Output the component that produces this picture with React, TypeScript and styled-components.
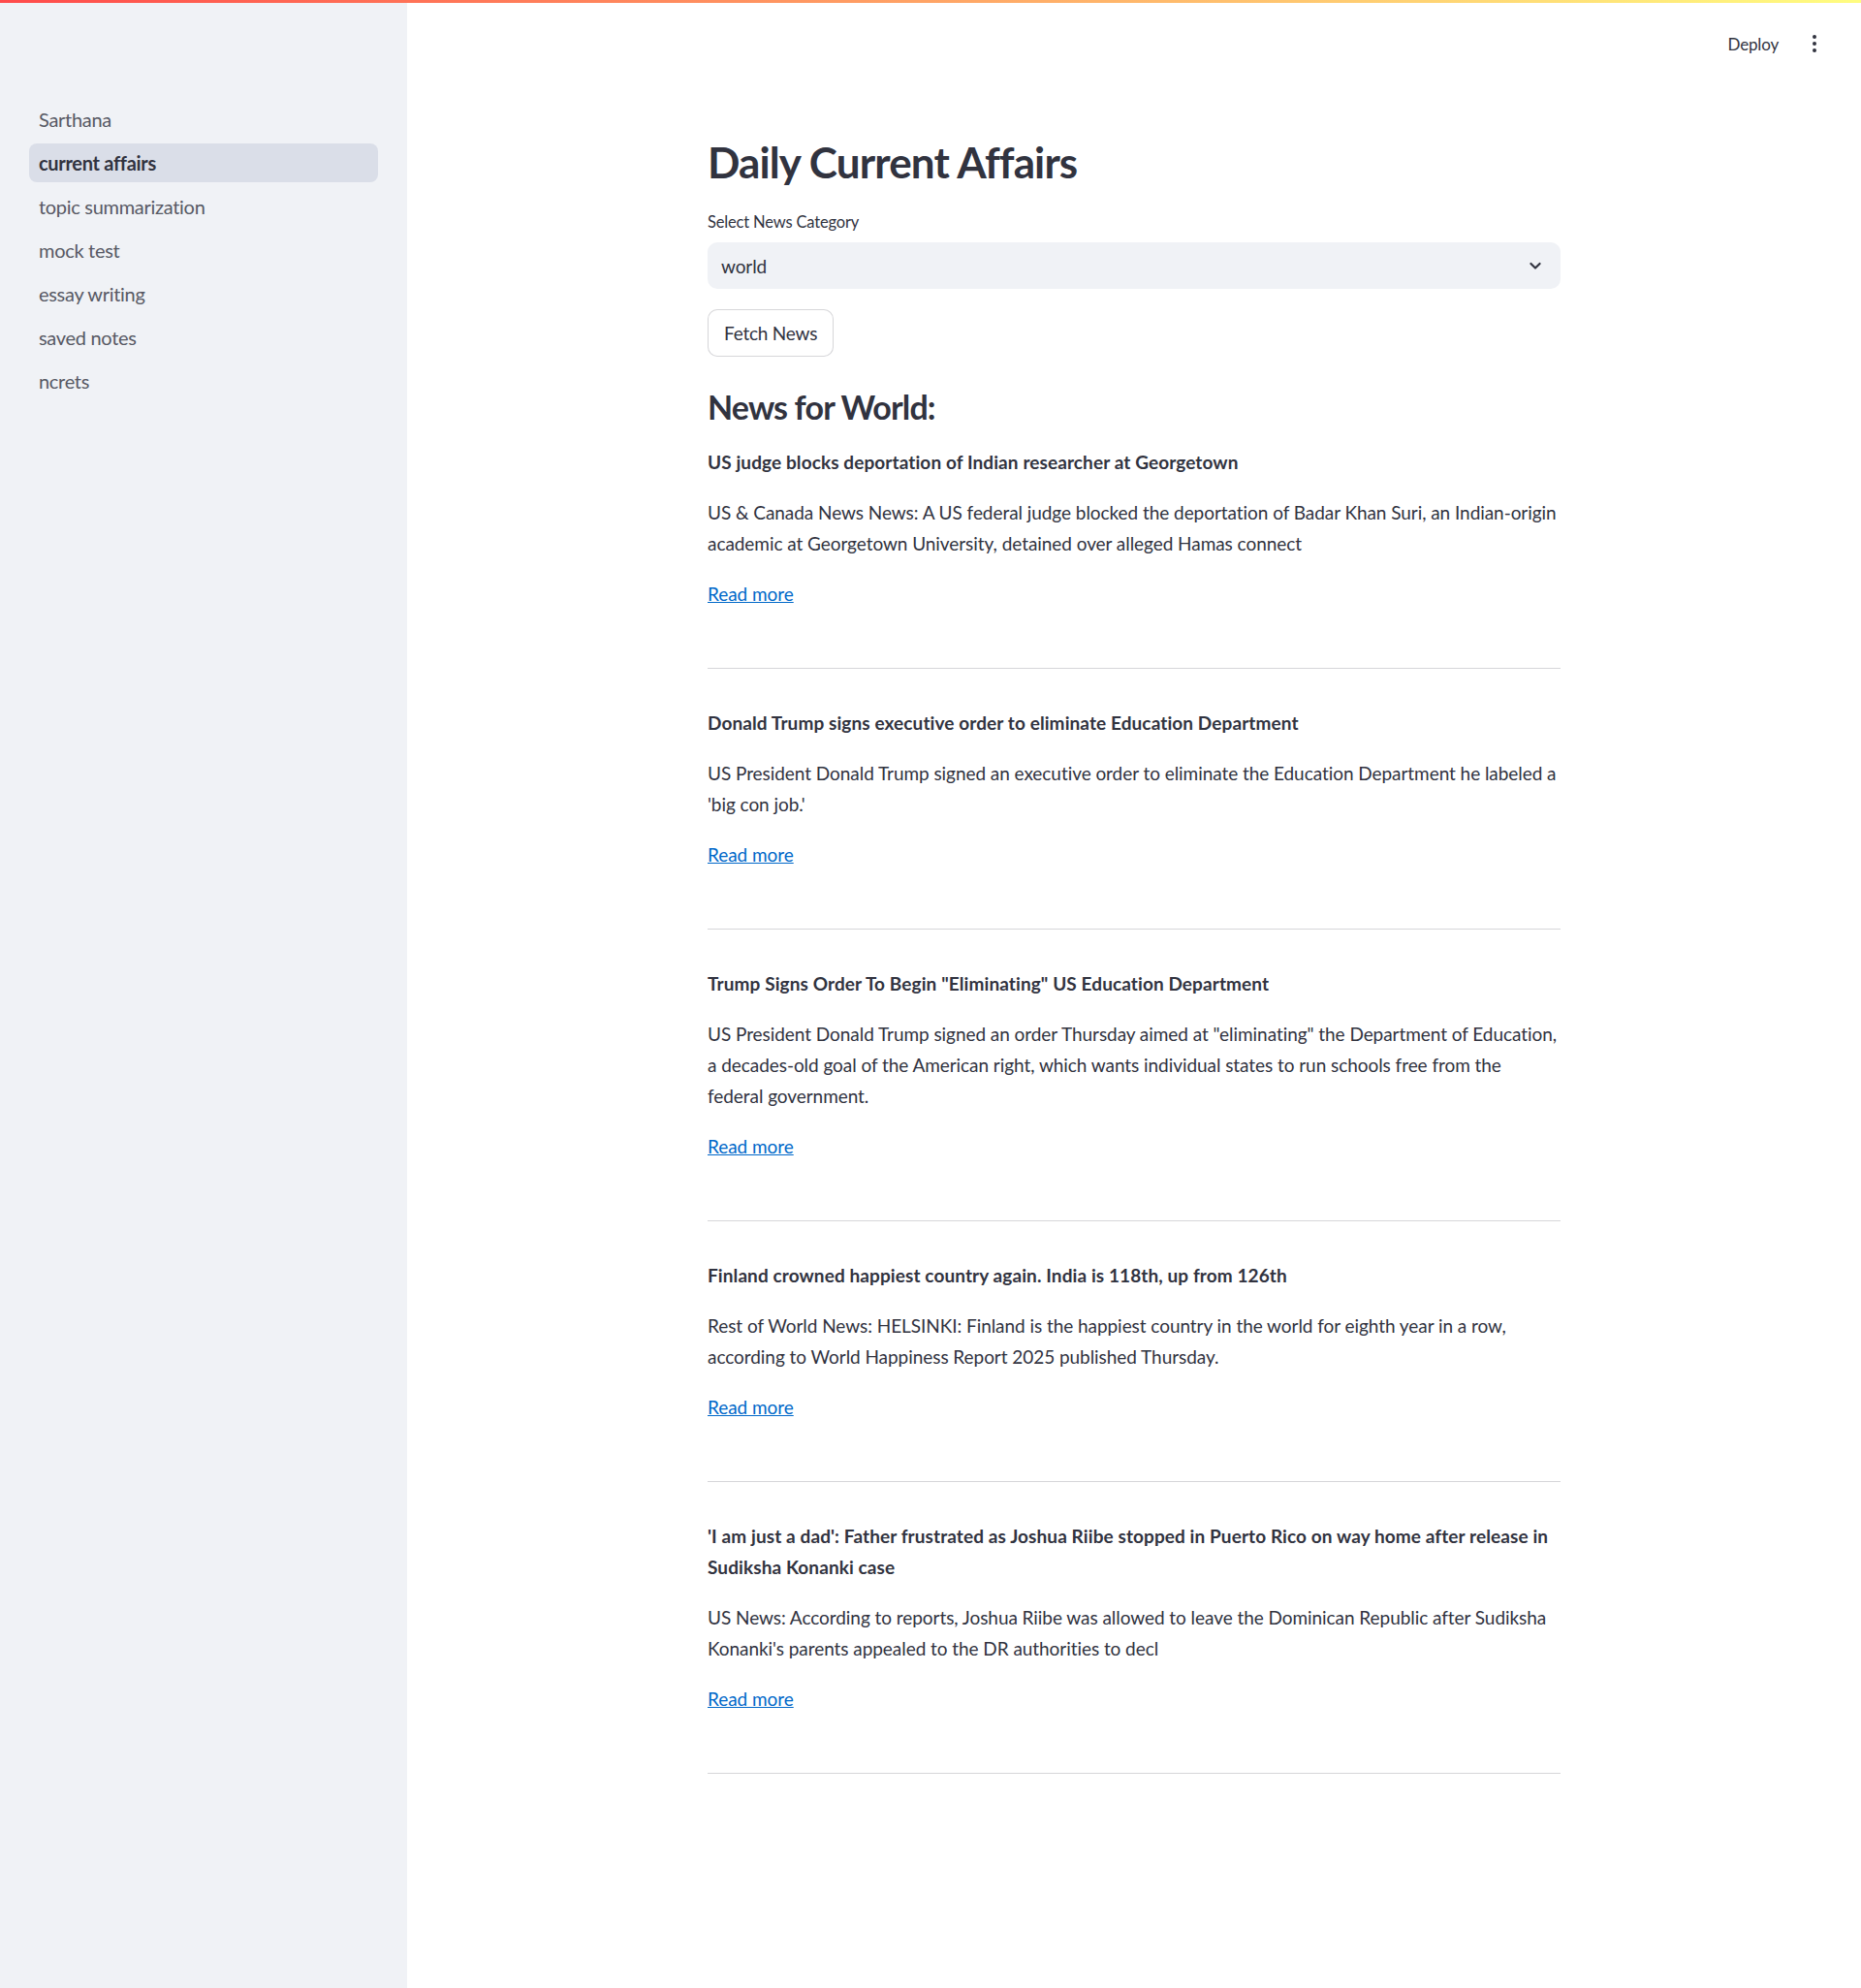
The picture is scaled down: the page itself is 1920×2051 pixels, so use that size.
import { FC } from 'react';
import styled, { createGlobalStyle } from 'styled-components';

const GlobalStyle = createGlobalStyle`
  * {
    box-sizing: border-box;
  }
  body {
    margin: 0;
    font-family: Lato, "Noto Sans", "Liberation Sans", sans-serif;
    color: #31333f;
    background: #ffffff;
  }
`;

type Article = {
  title: string;
  summary: string;
};

const pages = [
  'Sarthana',
  'current affairs',
  'topic summarization',
  'mock test',
  'essay writing',
  'saved notes',
  'ncrets',
];

const articles: Article[] = [
  {
    title: 'US judge blocks deportation of Indian researcher at Georgetown',
    summary:
      'US & Canada News News: A US federal judge blocked the deportation of Badar Khan Suri, an Indian-origin academic at Georgetown University, detained over alleged Hamas connect',
  },
  {
    title: 'Donald Trump signs executive order to eliminate Education Department',
    summary:
      "US President Donald Trump signed an executive order to eliminate the Education Department he labeled a 'big con job.'",
  },
  {
    title: 'Trump Signs Order To Begin "Eliminating" US Education Department',
    summary:
      'US President Donald Trump signed an order Thursday aimed at "eliminating" the Department of Education, a decades-old goal of the American right, which wants individual states to run schools free from the federal government.',
  },
  {
    title: 'Finland crowned happiest country again. India is 118th, up from 126th',
    summary:
      'Rest of World News: HELSINKI: Finland is the happiest country in the world for eighth year in a row, according to World Happiness Report 2025 published Thursday.',
  },
  {
    title:
      "'I am just a dad': Father frustrated as Joshua Riibe stopped in Puerto Rico on way home after release in Sudiksha Konanki case",
    summary:
      "US News: According to reports, Joshua Riibe was allowed to leave the Dominican Republic after Sudiksha Konanki's parents appealed to the DR authorities to decl",
  },
];

const ChevronDown: FC = () => (
  <svg width="20" height="20" viewBox="0 0 24 24" fill="none">
    <path
      d="M6.5 9.5L12 15l5.5-5.5"
      stroke="#31333f"
      strokeWidth="2.6"
      strokeLinecap="round"
      strokeLinejoin="round"
    />
  </svg>
);

const App: FC = () => {
  return (
    <>
      <GlobalStyle />
      <Decoration />
      <Layout>
        <Sidebar>
          <NavList>
            {pages.map((page) => (
              <NavItem key={page} $active={page === 'current affairs'}>
                {page}
              </NavItem>
            ))}
          </NavList>
        </Sidebar>
        <Main>
          <Header>
            <DeployButton>Deploy</DeployButton>
            <MenuButton aria-label="Main menu">
              <Dot />
              <Dot />
              <Dot />
            </MenuButton>
          </Header>
          <Content>
            <Title>Daily Current Affairs</Title>
            <Field>
              <Label>Select News Category</Label>
              <Select>
                <span>world</span>
                <ChevronDown />
              </Select>
            </Field>
            <FetchButton>Fetch News</FetchButton>
            <SectionHeading>News for World:</SectionHeading>
            {articles.map((article) => (
              <ArticleBlock key={article.title}>
                <ArticleTitle>{article.title}</ArticleTitle>
                <Summary>{article.summary}</Summary>
                <ReadMore href="#">Read more</ReadMore>
                <Divider />
              </ArticleBlock>
            ))}
          </Content>
        </Main>
      </Layout>
    </>
  );
};

export default App;

const Decoration = styled.div`
  position: fixed;
  top: 0;
  left: 0;
  right: 0;
  height: 3px;
  z-index: 10;
  background: linear-gradient(90deg, #ff4b4b, #fffd80);
`;

const Layout = styled.div`
  display: flex;
  min-height: 2051px;
`;

const Sidebar = styled.aside`
  width: 420px;
  flex-shrink: 0;
  background: #f0f2f6;
  padding: 103px 30px 0;
`;

const NavList = styled.nav`
  display: flex;
  flex-direction: column;
  gap: 5px;
`;

const NavItem = styled.a<{ $active?: boolean }>`
  display: flex;
  align-items: center;
  height: 40px;
  padding: 0 10px;
  border-radius: 8px;
  font-size: 20px;
  letter-spacing: -0.015em;
  cursor: pointer;
  color: ${({ $active }) => ($active ? '#31333f' : '#575964')};
  font-weight: ${({ $active }) => ($active ? 700 : 400)};
  background: ${({ $active }) => ($active ? '#dadee8' : 'transparent')};
`;

const Main = styled.main`
  flex: 1;
  display: flex;
  flex-direction: column;
`;

const Header = styled.header`
  height: 90px;
  display: flex;
  align-items: center;
  justify-content: flex-end;
  gap: 27px;
  padding-right: 38px;
`;

const DeployButton = styled.button`
  border: none;
  background: transparent;
  font-family: inherit;
  font-size: 17px;
  letter-spacing: -0.01em;
  color: #31333f;
  padding: 0;
`;

const MenuButton = styled.button`
  width: 20px;
  display: flex;
  flex-direction: column;
  align-items: center;
  gap: 3px;
  border: none;
  background: transparent;
  padding: 0;
`;

const Dot = styled.span`
  width: 4px;
  height: 4px;
  border-radius: 50%;
  background: #31333f;
`;

const Content = styled.div`
  width: 880px;
  margin: 0 auto;
  padding: 51px 0 200px;
  display: flex;
  flex-direction: column;
`;

const Title = styled.h1`
  margin: 0;
  font-size: 44px;
  line-height: 53px;
  font-weight: 700;
  letter-spacing: -0.02em;
`;

const Field = styled.div`
  margin-top: 20px;
  display: flex;
  flex-direction: column;
  gap: 6px;
`;

const Label = styled.label`
  font-size: 16.5px;
  line-height: 30px;
  letter-spacing: -0.01em;
`;

const Select = styled.div`
  height: 48px;
  border-radius: 10px;
  background: #f0f2f6;
  display: flex;
  align-items: center;
  justify-content: space-between;
  padding: 0 16px 0 14px;
  font-size: 19px;
  letter-spacing: -0.005em;
`;

const FetchButton = styled.button`
  margin-top: 21px;
  align-self: flex-start;
  height: 49px;
  padding: 0 16px;
  border: 1px solid rgba(49, 51, 63, 0.2);
  border-radius: 10px;
  background: #ffffff;
  font-family: inherit;
  font-size: 19px;
  letter-spacing: -0.012em;
  color: #31333f;
`;

const SectionHeading = styled.h3`
  margin: 31px 0 0;
  font-size: 34px;
  line-height: 42px;
  font-weight: 700;
  letter-spacing: -0.025em;
`;

const ArticleBlock = styled.section`
  margin-top: 20px;
  display: flex;
  flex-direction: column;
  & + & {
    margin-top: 40px;
  }
`;

const ArticleTitle = styled.p`
  margin: 0;
  font-size: 19px;
  line-height: 32px;
  font-weight: 700;
  letter-spacing: 0.005em;
`;

const Summary = styled.p`
  margin: 20px 0 0;
  font-size: 19px;
  line-height: 32px;
  letter-spacing: -0.003em;
`;

const ReadMore = styled.a`
  margin-top: 20px;
  align-self: flex-start;
  font-size: 19px;
  line-height: 32px;
  letter-spacing: -0.003em;
  color: #0068c9;
  text-decoration: underline;
`;

const Divider = styled.hr`
  margin: 60px 0 0;
  border: none;
  border-top: 1px solid rgba(49, 51, 63, 0.2);
`;
